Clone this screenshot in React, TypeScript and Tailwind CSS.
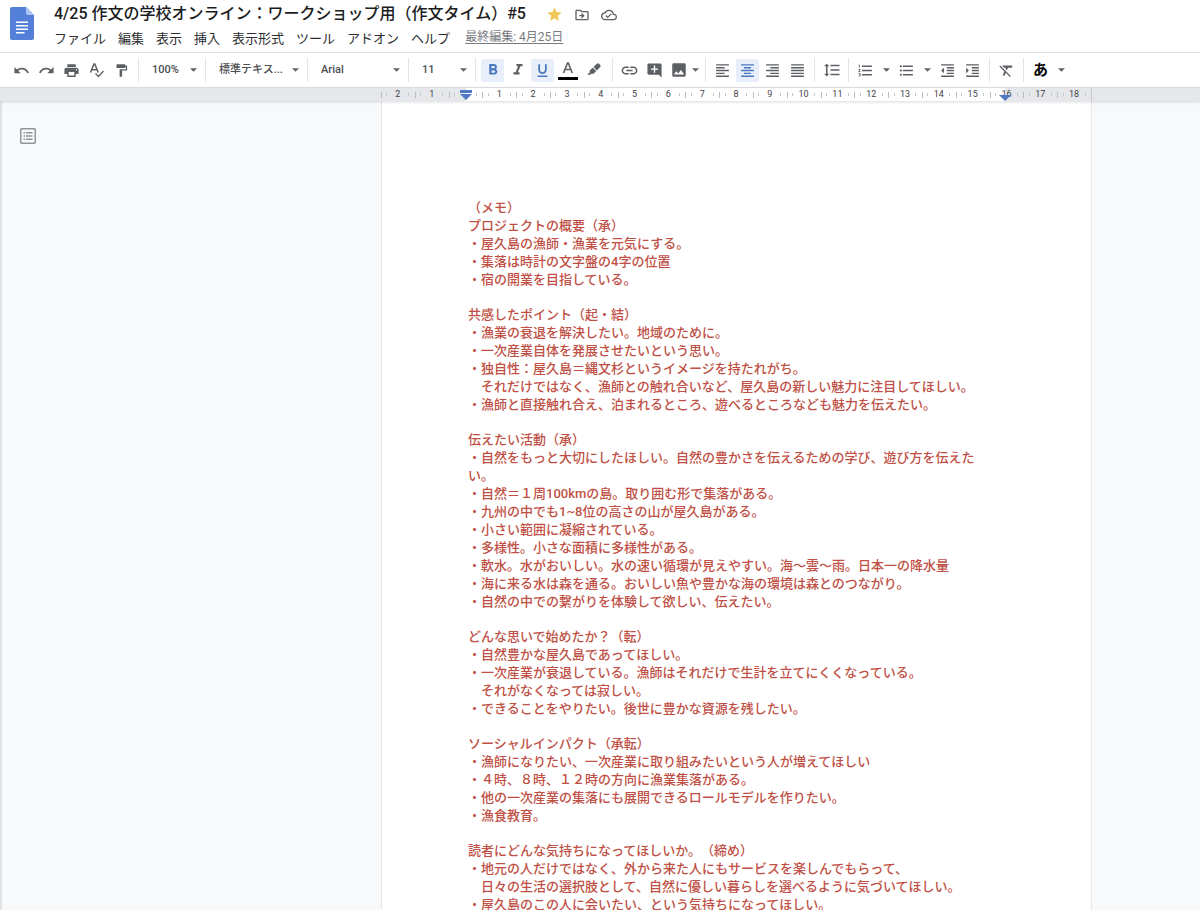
import type { ReactNode } from "react";
import {
  MdAddComment,
  MdFormatAlignCenter,
  MdFormatAlignJustify,
  MdFormatAlignLeft,
  MdFormatAlignRight,
  MdFormatBold,
  MdFormatClear,
  MdFormatIndentDecrease,
  MdFormatIndentIncrease,
  MdFormatItalic,
  MdFormatLineSpacing,
  MdFormatListBulleted,
  MdFormatListNumbered,
  MdFormatPaint,
  MdFormatUnderlined,
  MdImage,
  MdLink,
  MdOutlineCloudDone,
  MdOutlineDriveFileMove,
  MdPrint,
  MdRedo,
  MdStar,
  MdUndo,
} from "react-icons/md";

const MENUS = ["ファイル", "編集", "表示", "挿入", "表示形式", "ツール", "アドオン", "ヘルプ"];

const SECTIONS: string[][] = [
  [
    "（メモ）",
    "プロジェクトの概要（承）",
    "・屋久島の漁師・漁業を元気にする。",
    "・集落は時計の文字盤の4字の位置",
    "・宿の開業を目指している。",
  ],
  [
    "共感したポイント（起・結）",
    "・漁業の衰退を解決したい。地域のために。",
    "・一次産業自体を発展させたいという思い。",
    "・独自性：屋久島＝縄文杉というイメージを持たれがち。",
    "　それだけではなく、漁師との触れ合いなど、屋久島の新しい魅力に注目してほしい。",
    "・漁師と直接触れ合え、泊まれるところ、遊べるところなども魅力を伝えたい。",
  ],
  [
    "伝えたい活動（承）",
    "・自然をもっと大切にしたほしい。自然の豊かさを伝えるための学び、遊び方を伝えた\nい。",
    "・自然＝１周100kmの島。取り囲む形で集落がある。",
    "・九州の中でも1~8位の高さの山が屋久島がある。",
    "・小さい範囲に凝縮されている。",
    "・多様性。小さな面積に多様性がある。",
    "・軟水。水がおいしい。水の速い循環が見えやすい。海〜雲〜雨。日本一の降水量",
    "・海に来る水は森を通る。おいしい魚や豊かな海の環境は森とのつながり。",
    "・自然の中での繋がりを体験して欲しい、伝えたい。",
  ],
  [
    "どんな思いで始めたか？（転）",
    "・自然豊かな屋久島であってほしい。",
    "・一次産業が衰退している。漁師はそれだけで生計を立てにくくなっている。",
    "　それがなくなっては寂しい。",
    "・できることをやりたい。後世に豊かな資源を残したい。",
  ],
  [
    "ソーシャルインパクト（承転）",
    "・漁師になりたい、一次産業に取り組みたいという人が増えてほしい",
    "・４時、８時、１２時の方向に漁業集落がある。",
    "・他の一次産業の集落にも展開できるロールモデルを作りたい。",
    "・漁食教育。",
  ],
  [
    "読者にどんな気持ちになってほしいか。（締め）",
    "・地元の人だけではなく、外から来た人にもサービスを楽しんでもらって、",
    "　日々の生活の選択肢として、自然に優しい暮らしを選べるように気づいてほしい。",
    "・屋久島のこの人に会いたい、という気持ちになってほしい。",
  ],
];

function Caret() {
  return (
    <svg viewBox="0 0 8 4" className="h-1 w-[7px] shrink-0 fill-[#5f6368]" aria-hidden="true">
      <path d="M0 0h8L4 4z" />
    </svg>
  );
}

function Separator() {
  return <span className="mx-[3px] h-6 w-px shrink-0 bg-[#e3e5e8]" />;
}

type ToolProps = { label: string; active?: boolean; width?: string; children: ReactNode };

function Tool({ label, active = false, width = "w-[23px]", children }: ToolProps) {
  return (
    <button
      type="button"
      aria-label={label}
      className={`flex h-[23px] shrink-0 items-center justify-center rounded-xs ${width} ${
        active ? "bg-[#e8effb] text-[#4a78bd]" : "text-[#5c5f63]"
      }`}
    >
      {children}
    </button>
  );
}

function Picker({ label, value, width }: { label: string; value: string; width: string }) {
  return (
    <div className={`relative flex shrink-0 items-center ${width}`}>
      <select
        aria-label={label}
        defaultValue={value}
        className="h-[23px] w-full appearance-none bg-transparent pr-4 pl-2 text-[11px] font-medium text-[#4a4d51] outline-none"
      >
        <option>{value}</option>
      </select>
      <span className="pointer-events-none absolute right-[3px]">
        <Caret />
      </span>
    </div>
  );
}

function DocsLogo() {
  return (
    <svg viewBox="0 0 24 33" className="h-[33px] w-6" aria-hidden="true">
      <path d="M2 0h14l8 8v23a2 2 0 0 1-2 2H2a2 2 0 0 1-2-2V2a2 2 0 0 1 2-2z" fill="#5480da" />
      <path d="M16 0l8 8h-6a2 2 0 0 1-2-2z" fill="#a9c3f5" />
      <path d="M6 14.5h12v1.6H6zM6 18h12v1.6H6zM6 21.5h12v1.6H6zM6 25h8.500v1.600H6z" fill="#fff" />
    </svg>
  );
}

function SpellIcon() {
  return (
    <svg viewBox="0 0 16 16" className="size-4" fill="none" stroke="currentColor" aria-hidden="true">
      <path d="M1.500 10.500L5 2h.8l3.500 8.500M2.700 7.800h5.400" strokeWidth="1.500" />
      <path d="M6.500 11.500l3 3 5-5.500" strokeWidth="1.300" />
    </svg>
  );
}

function TextColorIcon() {
  return (
    <svg viewBox="0 0 20 22" className="h-[22px] w-5" fill="none" aria-hidden="true">
      <path d="M5.500 14L9.500 4h.8l4 10M7 10.500h5.800" stroke="currentColor" strokeWidth="1.600" />
      <path d="M0 18h20v3H0z" fill="#000" />
    </svg>
  );
}

function HighlighterIcon() {
  return (
    <svg viewBox="0 0 16 16" className="size-4" fill="currentColor" aria-hidden="true">
      <path d="M10.800 1.700a1.500 1.500 0 0 1 2.100 0l1.300 1.300a1.500 1.500 0 0 1 0 2.100L10.900 8.400 7.500 5z" />
      <path d="M6.800 5.700l3.400 3.400-2.600 2.600H5.300l-1 1.100H1.300l2.500-2.600V8.300z" />
    </svg>
  );
}

function OutlineIcon() {
  return (
    <svg viewBox="0 0 16 16" className="size-4" fill="none" stroke="#8f9296" aria-hidden="true">
      <rect x=".75" y=".75" width="14.500" height="14.500" rx="1" strokeWidth="1.500" />
      <path d="M3.500 4.700h1.500M6 4.700h6.500M3.500 8h1.500M6 8h6.500M3.500 11.300h1.500M6 11.300h6.500" strokeWidth="1.400" />
    </svg>
  );
}

function Header() {
  return (
    <header className="flex h-[52px] shrink-0 items-start bg-white pl-[10px]">
      <a href="#home" aria-label="ドキュメント ホーム" className="mt-[7px] shrink-0">
        <DocsLogo />
      </a>
      <div className="ml-5 flex flex-col">
        <div className="flex h-7 items-center">
          <h1 className="text-[16px] font-medium whitespace-nowrap text-[#1b1c1e]">
            4/25 作文の学校オンライン：ワークショップ用（作文タイム）#5
          </h1>
          <div className="ml-5 flex items-center gap-[11px] pt-px text-[#5c5f63]">
            <button type="button" aria-label="スター" className="text-[#f0c755]">
              <MdStar size={17} />
            </button>
            <button type="button" aria-label="移動">
              <MdOutlineDriveFileMove size={16} />
            </button>
            <button type="button" aria-label="ドキュメントのステータス">
              <MdOutlineCloudDone size={16} />
            </button>
          </div>
        </div>
        <nav className="flex h-[22px] items-center gap-3 text-[13px] whitespace-nowrap text-[#2b2d30]">
          {MENUS.map((menu) => (
            <button key={menu} type="button">
              {menu}
            </button>
          ))}
          <a href="#history" className="ml-[3px] pb-1 text-[12px] text-[#777a7e] underline underline-offset-2">
            最終編集: 4月25日
          </a>
        </nav>
      </div>
    </header>
  );
}

function Toolbar() {
  return (
    <div
      role="toolbar"
      aria-label="書式"
      className="flex h-9 shrink-0 items-center gap-[2px] overflow-hidden border-y border-[#dfe1e5] bg-white pl-[10px]"
    >
      <Tool label="元に戻す"><MdUndo size={17} /></Tool>
      <Tool label="やり直し"><MdRedo size={17} /></Tool>
      <Tool label="印刷"><MdPrint size={17} /></Tool>
      <Tool label="スペルチェック"><SpellIcon /></Tool>
      <Tool label="書式を貼り付け"><MdFormatPaint size={15} /></Tool>
      <Separator />
      <Picker label="ズーム" value="100%" width="w-14" />
      <Separator />
      <Picker label="スタイル" value="標準テキス..." width="w-[91px]" />
      <Separator />
      <Picker label="フォント" value="Arial" width="w-[90px]" />
      <Separator />
      <Picker label="フォントサイズ" value="11" width="w-14" />
      <Separator />
      <Tool label="太字" active><MdFormatBold size={18} /></Tool>
      <Tool label="斜体"><MdFormatItalic size={18} /></Tool>
      <Tool label="下線" active><MdFormatUnderlined size={17} /></Tool>
      <Tool label="テキストの色"><TextColorIcon /></Tool>
      <Tool label="ハイライトの色" width="w-[26px]"><HighlighterIcon /></Tool>
      <Separator />
      <Tool label="リンクを挿入"><MdLink size={19} /></Tool>
      <Tool label="コメントを追加"><MdAddComment size={17} /></Tool>
      <Tool label="画像を挿入" width="w-8">
        <MdImage size={18} />
        <span className="ml-1"><Caret /></span>
      </Tool>
      <Separator />
      <Tool label="左揃え"><MdFormatAlignLeft size={17} /></Tool>
      <Tool label="中央揃え" active><MdFormatAlignCenter size={17} /></Tool>
      <Tool label="右揃え"><MdFormatAlignRight size={17} /></Tool>
      <Tool label="両端揃え"><MdFormatAlignJustify size={17} /></Tool>
      <Separator />
      <Tool label="行間隔"><MdFormatLineSpacing size={18} /></Tool>
      <Separator />
      <Tool label="番号付きリスト"><MdFormatListNumbered size={17} /></Tool>
      <Tool label="番号付きリストの種類" width="w-[14px]"><Caret /></Tool>
      <Tool label="箇条書き"><MdFormatListBulleted size={17} /></Tool>
      <Tool label="箇条書きの種類" width="w-[14px]"><Caret /></Tool>
      <Tool label="インデント減"><MdFormatIndentDecrease size={17} /></Tool>
      <Tool label="インデント増"><MdFormatIndentIncrease size={17} /></Tool>
      <Separator />
      <Tool label="書式をクリア"><MdFormatClear size={17} /></Tool>
      <Separator />
      <Tool label="入力ツール"><span className="text-[15px] font-bold text-black">あ</span></Tool>
      <Tool label="入力ツールの選択" width="w-[14px]"><Caret /></Tool>
    </div>
  );
}

function Ruler() {
  const cells = Array.from({ length: 21 }, (_, i) => Math.abs(i - 2));
  return (
    <div className="relative z-10 flex h-[13px] shrink-0 bg-[#e6e7eb] shadow-[0_1px_3px_rgba(60,64,67,0.2)]">
      <div className="w-[273px] shrink-0" />
      <div className="flex flex-1 justify-center">
        <div className="relative w-full max-w-[711px]">
          <div className="absolute inset-y-0 right-[87px] left-[85px] bg-white" />
          <div className="relative grid h-full grid-cols-[repeat(21,minmax(0,1fr))] border-r border-[#b4b7bb]/60">
            {cells.map((value, i) => (
              <div key={i} className="flex items-center justify-between text-[9px] leading-none text-[#3f4245]">
                <span className="h-[6px] w-px bg-[#b9bcc0]" />
                <span className="h-[3px] w-px bg-[#c4c7ca]" />
                <span className="w-3 text-center">{value === 0 ? "" : value}</span>
                <span className="h-[3px] w-px bg-[#c4c7ca]" />
                <span className="w-px" />
              </div>
            ))}
          </div>
          <svg viewBox="0 0 12 10" className="absolute top-[2px] left-[79px] h-[10px] w-3 fill-[#4f79c4]" aria-hidden="true">
            <path d="M0 0h12v3H0zM0 4h12L6 10z" />
          </svg>
          <svg viewBox="0 0 12 6" className="absolute right-[81px] bottom-0 h-[6px] w-3 fill-[#4f79c4]" aria-hidden="true">
            <path d="M0 0h12L6 6z" />
          </svg>
        </div>
      </div>
    </div>
  );
}

export default function App() {
  return (
    <div className="flex h-screen flex-col overflow-hidden bg-[#f8f9fb] font-['Roboto','Noto_Sans_CJK_JP',sans-serif] [text-spacing-trim:space-all]">
      <Header />
      <Toolbar />
      <Ruler />
      <div className="flex min-h-0 flex-1 overflow-y-auto border-l-2 border-[#e1e3e7] [scrollbar-width:none]">
        <aside className="w-[271px] shrink-0 pt-[26px] pl-[18px]">
          <button type="button" aria-label="ドキュメントの概要を表示">
            <OutlineIcon />
          </button>
        </aside>
        <main className="flex flex-1 justify-center">
          <article className="h-max w-full max-w-[711px] border-x border-[#e6e8eb] bg-white px-[86px] pt-[98px] pb-24 text-[13px] leading-[18px] font-medium whitespace-pre text-[#c05045]">
            {SECTIONS.map((lines) => (
              <section key={lines[0]} className="mb-[17px]">
                {lines.map((line) => (
                  <p key={line}>{line}</p>
                ))}
              </section>
            ))}
          </article>
        </main>
      </div>
    </div>
  );
}
